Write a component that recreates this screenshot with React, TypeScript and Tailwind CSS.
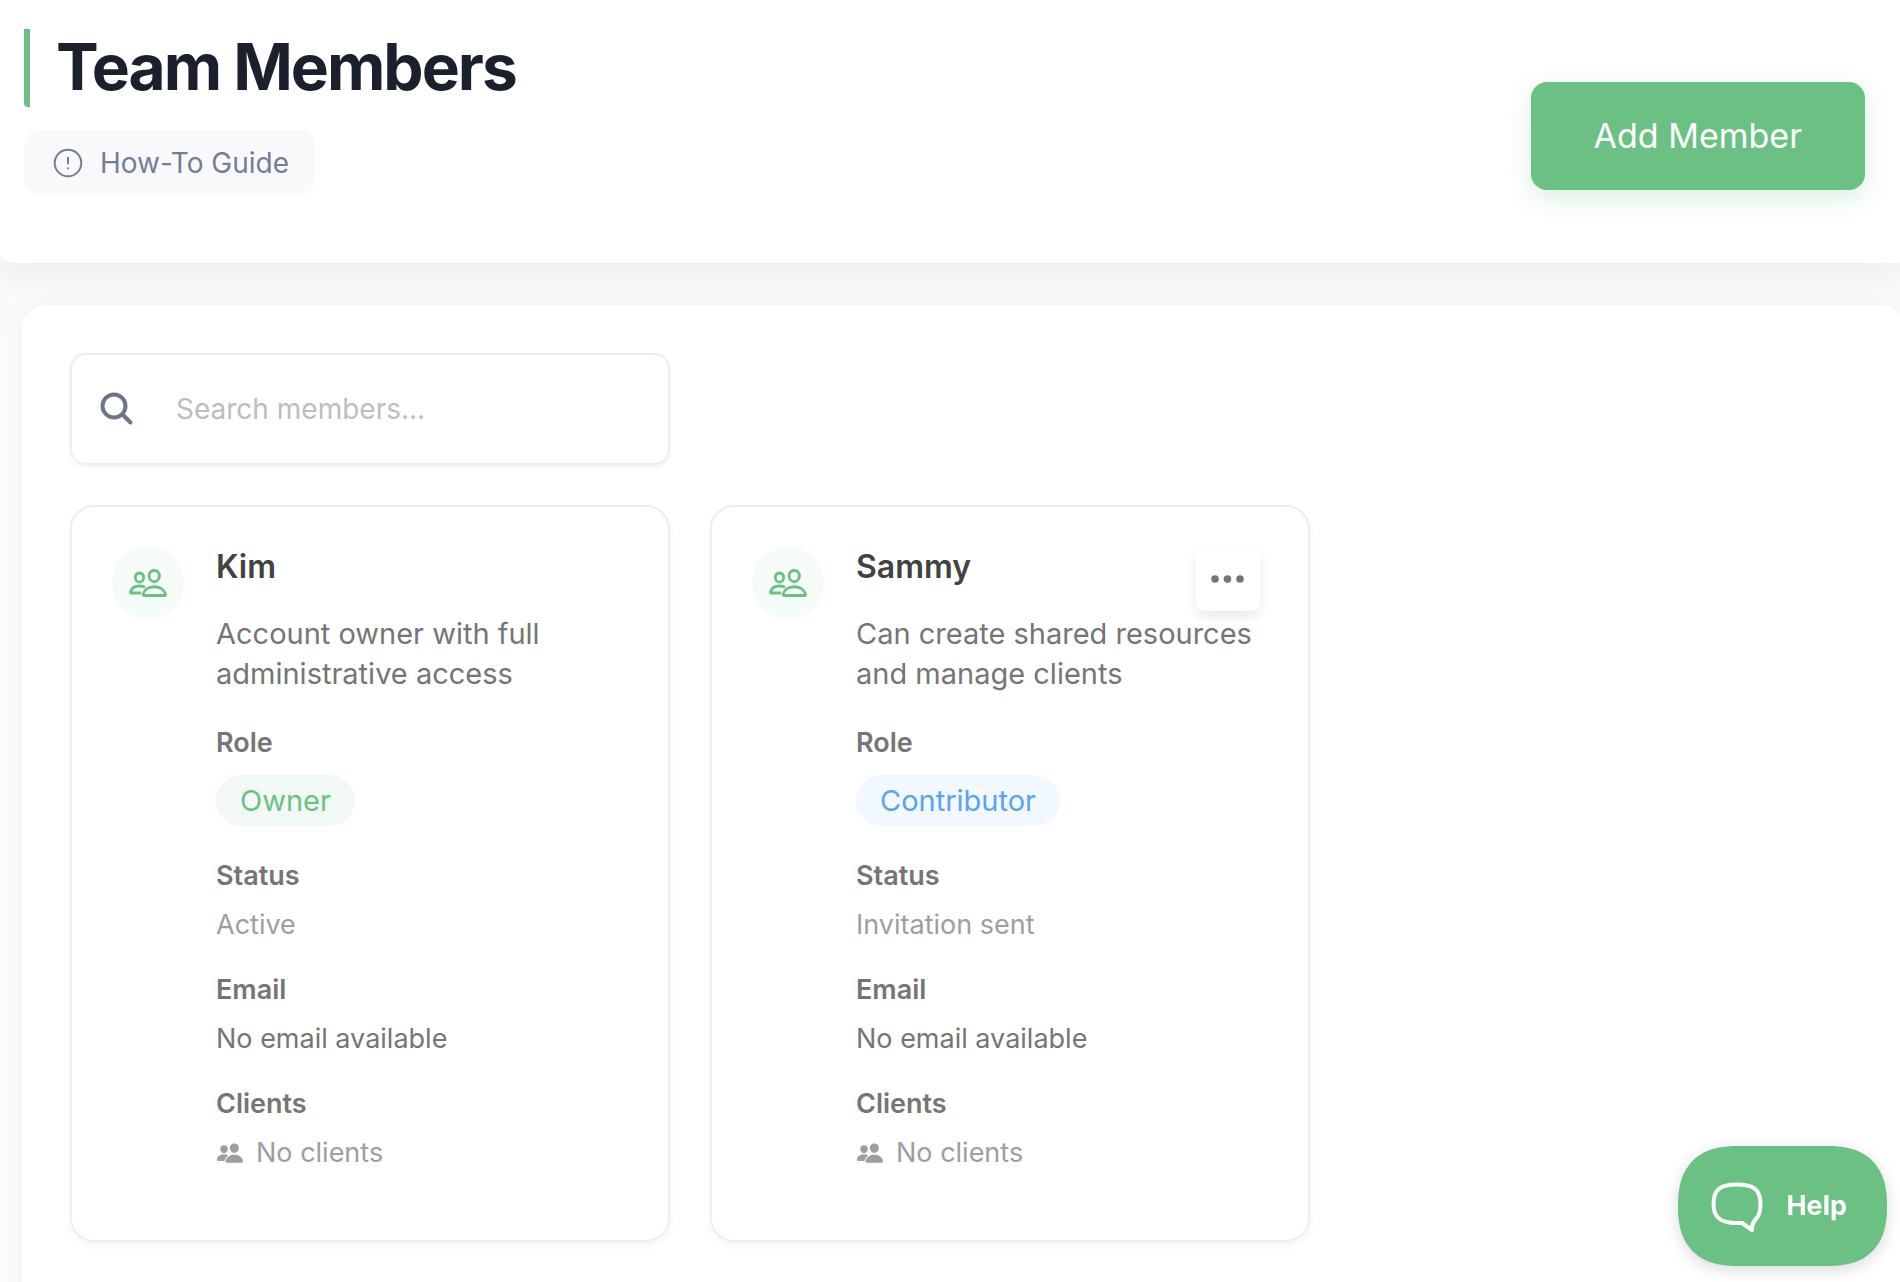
import { IoPeople, IoPeopleOutline } from "react-icons/io5";

type Member = {
  name: string;
  description: string;
  role: string;
  roleClass: string;
  status: string;
  hasMenu: boolean;
};

const members: Member[] = [
  {
    name: "Kim",
    description: "Account owner with full administrative access",
    role: "Owner",
    roleClass: "bg-[#f2f9f5] text-[#6bc184]",
    status: "Active",
    hasMenu: false,
  },
  {
    name: "Sammy",
    description: "Can create shared resources and manage clients",
    role: "Contributor",
    roleClass: "bg-[#f2f8ff] text-[#5ba3f0]",
    status: "Invitation sent",
    hasMenu: true,
  },
];

function GuideIcon() {
  return (
    <svg viewBox="0 0 32 32" className="size-8" fill="none" stroke="currentColor" strokeWidth="2" aria-hidden="true">
      <circle cx="16" cy="16" r="13.3" />
      <path d="M16 10v7.300" />
      <circle cx="16" cy="21.3" r="1.1" fill="currentColor" stroke="none" />
    </svg>
  );
}

function SearchIcon() {
  return (
    <svg viewBox="0 0 36 36" className="size-9" fill="none" stroke="currentColor" strokeWidth="4" strokeLinecap="round" aria-hidden="true">
      <circle cx="15" cy="15" r="11.5" />
      <path d="M23.5 23.5l8 8" />
    </svg>
  );
}

function DotsIcon() {
  return (
    <svg viewBox="0 0 34 8" className="h-2 w-[34px]" fill="currentColor" aria-hidden="true">
      <circle cx="4" cy="4" r="3.8" />
      <circle cx="16.5" cy="4" r="3.8" />
      <circle cx="29" cy="4" r="3.8" />
    </svg>
  );
}

function ChatIcon() {
  return (
    <svg viewBox="0 0 52 52" className="size-13" fill="none" stroke="currentColor" strokeWidth="4" strokeLinejoin="round" aria-hidden="true">
      <path d="M26 4.500C10 4.500 2.500 9 2.500 24C2.500 38 10 43 26 43H31L41 50C41 45 42 42 44.500 39.500C48 36 49.500 32 49.500 24C49.500 9 42 4.500 26 4.500Z" />
    </svg>
  );
}

function MemberCard({ member }: { member: Member }) {
  return (
    <article className="relative flex w-150 gap-8 rounded-3xl border-2 border-[#eeeeee] bg-white px-10 pt-10 pb-[69px] shadow-[0_4px_8px_rgba(0,0,0,0.04)]">
      <div className="flex size-18 shrink-0 items-center justify-center rounded-full bg-[#f5fbf7] text-[#6bc184]">
        <IoPeopleOutline className="size-10 [&_*]:[stroke-width:36px]" aria-hidden="true" />
      </div>
      <div className="min-w-0 flex-1">
        <h2 className="text-[32px] leading-10 font-semibold text-[#424242]">{member.name}</h2>
        <p className="mt-[27px] text-[29px] leading-10 text-[#757575]">{member.description}</p>
        <dl className="mt-[31px] text-[27px] leading-9">
          <dt className="font-semibold text-[#757575]">Role</dt>
          <dd className="mt-[14px] flex">
            <span className={`rounded-full px-6 py-2 text-[29px] leading-[35px] ${member.roleClass}`}>{member.role}</span>
          </dd>
          <dt className="mt-8 font-semibold text-[#757575]">Status</dt>
          <dd className="mt-[13px] text-[#9e9e9e]">{member.status}</dd>
          <dt className="mt-[29px] font-semibold text-[#757575]">Email</dt>
          <dd className="mt-[13px] text-[#757575]">No email available</dd>
          <dt className="mt-[29px] font-semibold text-[#757575]">Clients</dt>
          <dd className="mt-[13px] flex items-center gap-3 text-[#9e9e9e]">
            <IoPeople className="size-7" aria-hidden="true" />
            No clients
          </dd>
        </dl>
      </div>
      {member.hasMenu && (
        <button
          type="button"
          aria-label={`Actions for ${member.name}`}
          className="absolute top-10 right-12 flex size-16 items-center justify-center rounded-lg bg-white text-[#757575] shadow-[0_6px_12px_rgba(0,0,0,0.09)]"
        >
          <DotsIcon />
        </button>
      )}
    </article>
  );
}

export default function App() {
  return (
    <div className="min-h-screen overflow-hidden bg-[#f9fafc] font-['Inter',sans-serif]">
      <header className="-ml-1 flex items-start justify-between rounded-bl-[20px] bg-white pt-[29px] pr-[35px] pb-[68px] pl-7 shadow-[0_8px_40px_rgba(30,41,59,0.07)]">
        <div className="flex flex-col items-start">
          <h1 className="rounded-b-sm border-l-6 border-[#6bc184] pb-0.5 pl-[26px] text-[64px] leading-[76px] font-bold tracking-[-2px] text-[#1a202c]">
            Team Members
          </h1>
          <button type="button" className="mt-[23px] flex h-[65px] items-center gap-4 rounded-2xl bg-[#f9f9fc] pr-[26px] pl-7 text-[28px] text-[#718096]">
            <GuideIcon />
            How-To Guide
          </button>
        </div>
        <button
          type="button"
          className="mt-[53px] h-27 rounded-2xl bg-[#6bc184] px-[63px] pb-0.5 text-[34px] text-white shadow-[0_8px_24px_rgba(107,193,132,0.25)]"
        >
          Add Member
        </button>
      </header>

      <main className="mt-[42px] -mr-1 ml-[22px] min-h-[1000px] rounded-3xl bg-white px-12 pt-12 shadow-[0_4px_24px_rgba(0,0,0,0.05)]">
        <label className="flex h-28 w-150 items-center gap-[41px] rounded-2xl border-2 border-[#eeeeee] bg-white px-[27px] text-[#6b7488] shadow-[0_2px_4px_rgba(0,0,0,0.05)]">
          <SearchIcon />
          <input
            type="text"
            aria-label="Search members"
            placeholder="Search members..."
            className="min-w-0 flex-1 bg-transparent text-[28px] text-[#424242] outline-none placeholder:text-[#bdbdbd]"
          />
        </label>
        <section className="mt-10 flex flex-wrap gap-10">
          {members.map((member) => (
            <MemberCard key={member.name} member={member} />
          ))}
        </section>
      </main>

      <button
        type="button"
        className="fixed right-[13px] bottom-4 flex h-30 items-center gap-[23px] rounded-[60px] bg-[#6bc184] pr-10 pl-[33px] text-[27px] font-bold text-white shadow-[0_4px_16px_rgba(0,0,0,0.15)] [corner-shape:superellipse(1.3)]"
      >
        <ChatIcon />
        Help
      </button>
    </div>
  );
}
